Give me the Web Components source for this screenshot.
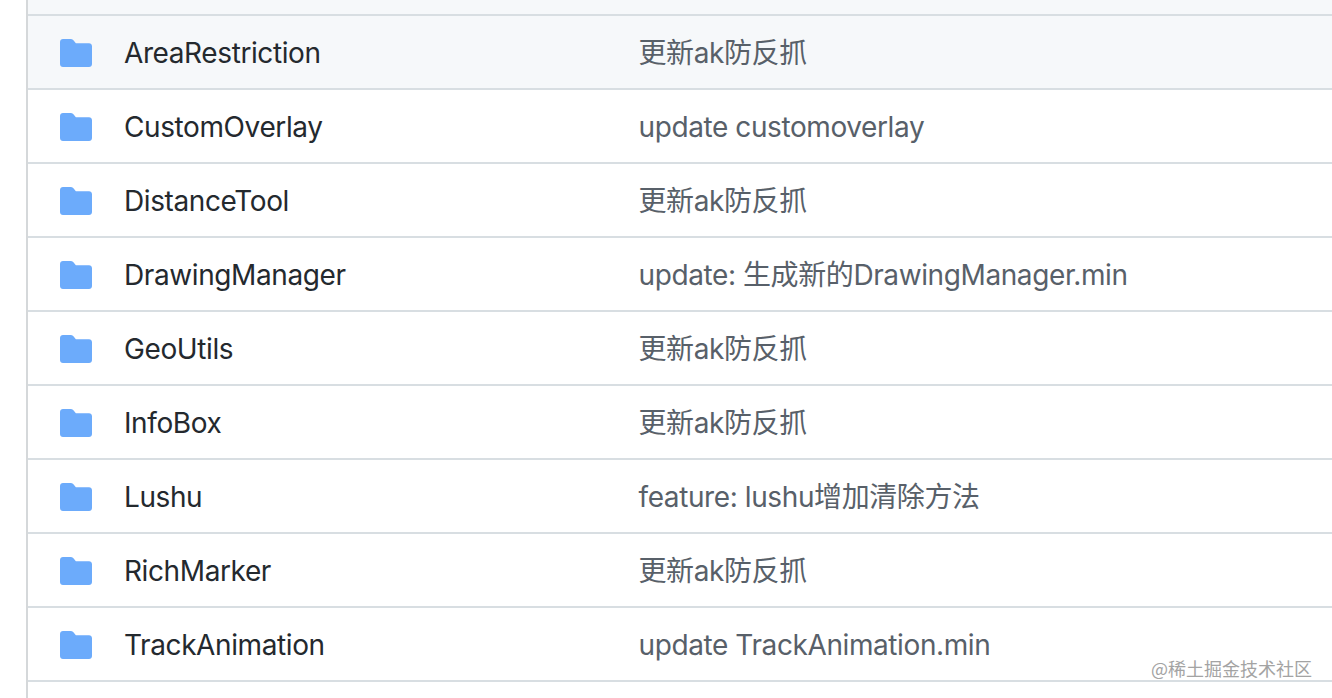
<!DOCTYPE html>
<html lang="zh">
<head>
<meta charset="utf-8">
<title>Repository files</title>
<style>
  html, body { margin: 0; height: 100%; background: #fff; overflow: hidden; }
</style>
</head>
<body>
<file-list>
  <file-row name="AreaRestriction" hover>更新ak防反抓</file-row>
  <file-row name="CustomOverlay">update customoverlay</file-row>
  <file-row name="DistanceTool">更新ak防反抓</file-row>
  <file-row name="DrawingManager">update: 生成新的DrawingManager.min</file-row>
  <file-row name="GeoUtils">更新ak防反抓</file-row>
  <file-row name="InfoBox">更新ak防反抓</file-row>
  <file-row name="Lushu">feature: lushu增加清除方法</file-row>
  <file-row name="RichMarker">更新ak防反抓</file-row>
  <file-row name="TrackAnimation">update TrackAnimation.min</file-row>
</file-list>
<water-mark>@稀土掘金技术社区</water-mark>

<script>
const listTemplate = document.createElement("template");
listTemplate.innerHTML = `
  <style>
    :host {
      display: block;
      margin-left: 26px;
      height: 698px;
      box-sizing: border-box;
      border-left: 2px solid #d5d8da;
      font-family: Inter, "Noto Sans CJK SC", sans-serif;
    }
    .top {
      height: 14px;
      background: #f6f8fa;
      border-bottom: 2px solid #d8dee2;
    }
  </style>
  <div class="top"></div>
  <slot></slot>
`;

class FileList extends HTMLElement {
  constructor() {
    super();
    this.attachShadow({ mode: "open" }).appendChild(listTemplate.content.cloneNode(true));
  }
}

const rowTemplate = document.createElement("template");
rowTemplate.innerHTML = `
  <style>
    :host {
      display: grid;
      grid-template-columns: 96px 514.5px 1fr;
      align-items: center;
      height: 70px;
      padding-top: 2px;
      border-bottom: 2px solid #d8dee2;
      background: #fff;
      font-size: 28px;
      line-height: 34px;
      letter-spacing: -0.4px;
      white-space: nowrap;
    }
    :host([hover]) { background: #f6f8fa; }
    svg { display: block; width: 32px; height: 28px; margin-left: 32px; }
    .name { color: #24292e; }
    .msg { color: #586069; }
  </style>
  <svg viewBox="0 0 32 28" aria-hidden="true">
    <path fill="#6cabfb" d="M3 0h7.6c1 0 1.9.4 2.6 1.1l2.7 3.1H29c1.7 0 3 1.3 3 3V25c0 1.7-1.3 3-3 3H3c-1.7 0-3-1.3-3-3V3c0-1.7 1.3-3 3-3z"/>
  </svg>
  <span class="name"></span>
  <span class="msg"><slot></slot></span>
`;

class FileRow extends HTMLElement {
  constructor() {
    super();
    this.attachShadow({ mode: "open" }).appendChild(rowTemplate.content.cloneNode(true));
    this.shadowRoot.querySelector(".name").textContent = this.getAttribute("name");
  }
}

const markTemplate = document.createElement("template");
markTemplate.innerHTML = `
  <style>
    :host {
      position: absolute;
      right: 20px;
      top: 656px;
      font: 18px "Noto Sans CJK SC", sans-serif;
      line-height: 24px;
      color: #a3a3a3;
      white-space: nowrap;
    }
  </style>
  <slot></slot>
`;

class WaterMark extends HTMLElement {
  constructor() {
    super();
    this.attachShadow({ mode: "open" }).appendChild(markTemplate.content.cloneNode(true));
  }
}

customElements.define("file-list", FileList);
customElements.define("file-row", FileRow);
customElements.define("water-mark", WaterMark);
</script>
</body>
</html>
